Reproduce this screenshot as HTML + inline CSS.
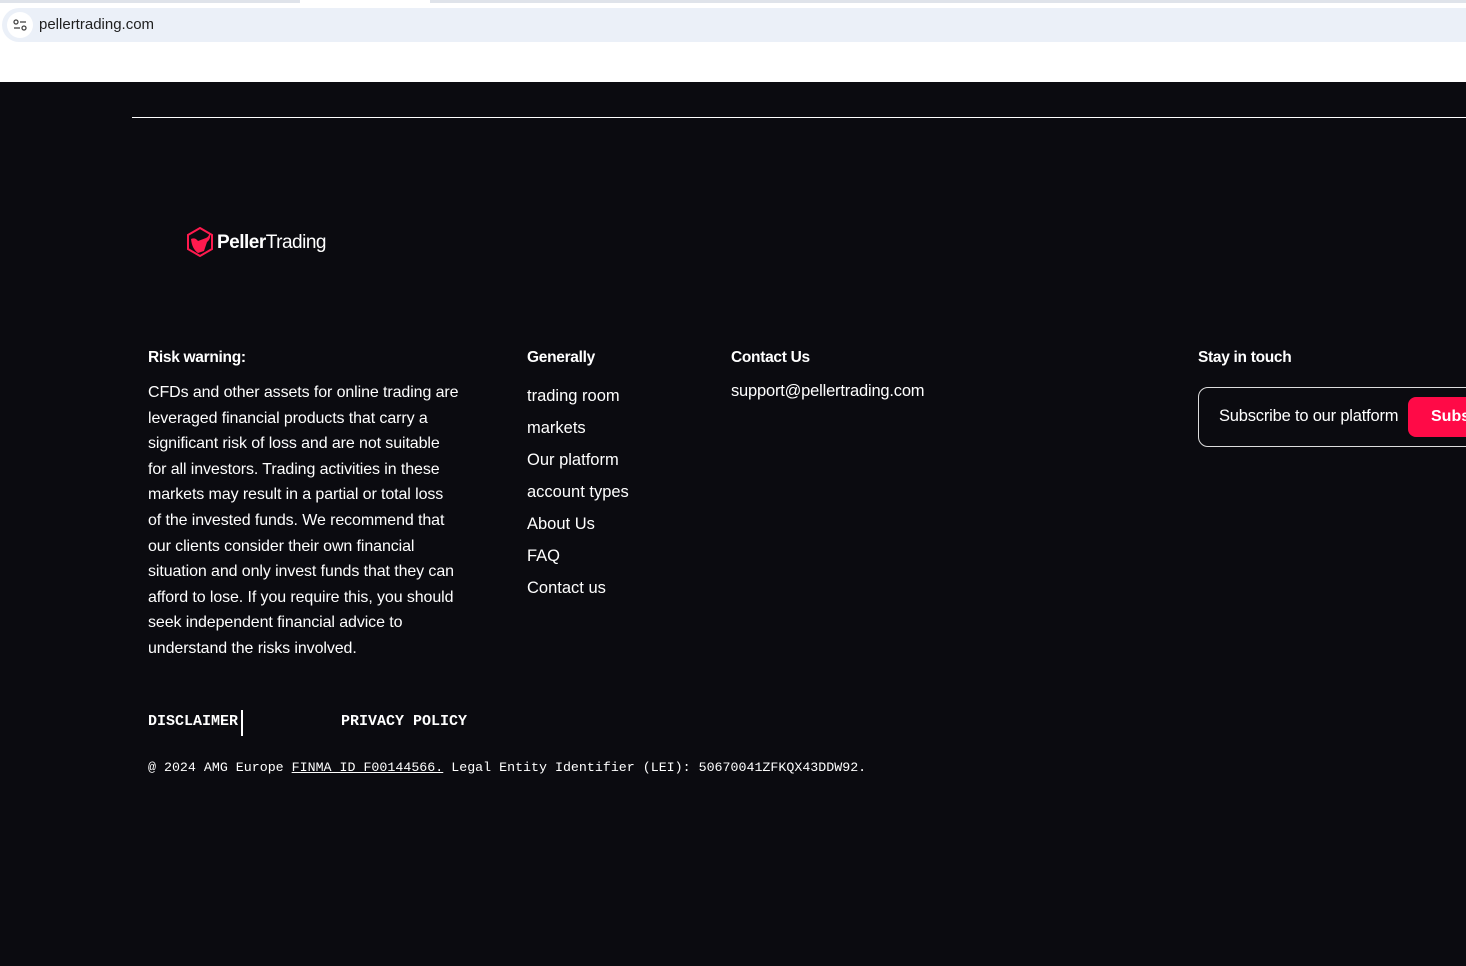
<!DOCTYPE html>
<html><head><meta charset="utf-8"><style>
*{margin:0;padding:0;box-sizing:border-box}
body{width:1466px;height:966px;overflow:hidden;background:#0b0b10;font-family:"Liberation Sans",sans-serif;color:#fff;position:relative}
.chrome{position:absolute;left:0;top:0;width:1466px;height:82px;background:#fff}
.tabs{position:absolute;top:0;left:0;width:1466px;height:3px;background:#dfe3ea}
.tabs i{position:absolute;top:0;left:300px;width:130px;height:3px;background:#fff}
.url{position:absolute;left:2px;top:8px;width:1464px;height:34px;background:#ebf0f8;border-radius:17px 0 0 17px}
.url .ic{position:absolute;left:5px;top:4px;width:26px;height:26px;border-radius:50%;background:#fff}
.url span{position:absolute;left:37px;top:8px;font-size:15px;color:#1f1f1f}
.abs{position:absolute}
.line{left:132px;top:117px;width:1334px;height:1px;background:#fff}
h4{font-size:15.5px;font-weight:bold;position:absolute;letter-spacing:-0.3px}
.risk{left:148px;top:380px;width:340px;font-size:16px;line-height:25.6px;letter-spacing:-0.1px;white-space:nowrap}
.links{left:527px;top:380px;font-size:16.5px;line-height:32px}
.mono{font-family:"Liberation Mono",monospace;font-size:13.3px}
</style></head><body>
<div class="chrome"><div class="tabs"><i></i></div>
<div class="url"><div class="ic"><svg width="26" height="26" viewBox="0 0 26 26"><circle cx="9" cy="10" r="2" fill="none" stroke="#444" stroke-width="1.3"/><line x1="13" y1="10" x2="19" y2="10" stroke="#444" stroke-width="1.3"/><line x1="7" y1="16" x2="13" y2="16" stroke="#444" stroke-width="1.3"/><circle cx="17" cy="16" r="2" fill="none" stroke="#444" stroke-width="1.3"/></svg></div><span>pellertrading.com</span></div></div>
<div class="abs line"></div>
<div class="abs" style="left:186px;top:227px"><svg width="28" height="30" viewBox="0 0 28 30"><path d="M14 1 L26 8 L26 22 L14 29 L2 22 L2 8 Z" fill="none" stroke="#ff1a4e" stroke-width="2"/><path d="M5 12 Q9 10 12 14 L20 11 Q24 9 23 5 Q26 11 21 15 L18 24 L12 26 Q6 22 5 12 Z" fill="#ff1a4e"/></svg></div>
<div class="abs" style="left:217px;top:232px;font-size:19px;letter-spacing:-0.5px"><b>Peller</b>Trading</div>
<h4 style="left:148px;top:349px">Risk warning:</h4>
<div class="abs risk">CFDs and other assets for online trading are<br>leveraged financial products that carry a<br>significant risk of loss and are not suitable<br>for all investors. Trading activities in these<br>markets may result in a partial or total loss<br>of the invested funds. We recommend that<br>our clients consider their own financial<br>situation and only invest funds that they can<br>afford to lose. If you require this, you should<br>seek independent financial advice to<br>understand the risks involved.</div>
<h4 style="left:527px;top:349px">Generally</h4>
<div class="abs links">trading room<br>markets<br>Our platform<br>account types<br>About Us<br>FAQ<br>Contact us</div>
<h4 style="left:731px;top:349px">Contact Us</h4>
<div class="abs" style="left:731px;top:382px;font-size:16.5px;letter-spacing:-0.2px">support@pellertrading.com</div>
<h4 style="left:1198px;top:349px">Stay in touch</h4>
<div class="abs" style="left:1198px;top:387px;width:290px;height:60px;border:1px solid #ddd;border-radius:10px"></div>
<div class="abs" style="left:1219px;top:407px;font-size:16.5px;letter-spacing:-0.2px">Subscribe to our platform</div>
<div class="abs" style="left:1408px;top:397px;width:80px;height:40px;background:#ff0a47;border-radius:8px;font-size:16px;font-weight:bold;padding:11px 0 0 23px">Subscribe</div>
<div class="abs mono" style="left:148px;top:713px;font-weight:bold;font-size:15px">DISCLAIMER</div>
<div class="abs" style="left:241px;top:710px;width:2px;height:26px;background:#fff"></div>
<div class="abs mono" style="left:341px;top:713px;font-weight:bold;font-size:15px">PRIVACY POLICY</div>
<div class="abs mono" style="left:148px;top:760px;white-space:nowrap">@ 2024 AMG Europe <u>FINMA ID F00144566.</u> Legal Entity Identifier (LEI): 50670041ZFKQX43DDW92.</div>
</body></html>
